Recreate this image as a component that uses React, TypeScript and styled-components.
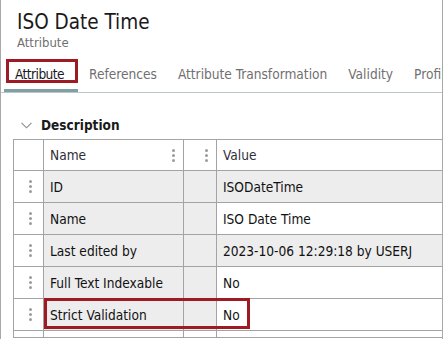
import React from "react";
import styled, { createGlobalStyle } from "styled-components";

const Global = createGlobalStyle`
  html, body { margin: 0; padding: 0; background: #ffffff; }
  body { font-family: "DejaVu Sans Condensed", "DejaVu Sans", "Liberation Sans", sans-serif; }
  * { box-sizing: border-box; }
`;

const Frame = styled.div`
  width: 443px;
  height: 339px;
  overflow: hidden;
  background: #ffffff;
  border-left: 1px solid #a8a8a8;
  border-right: 1px solid #a8a8a8;
`;

const Header = styled.header`
  padding: 10px 0 0 16px;
`;

const Title = styled.h1`
  margin: 0;
  font-size: 20.5px;
  line-height: 24px;
  font-weight: 400;
  color: #1a1a1a;
`;

const Subtitle = styled.div`
  margin-top: 1px;
  font-size: 13px;
  line-height: 16px;
  color: #6f6f6f;
`;

const TabStrip = styled.nav`
  display: flex;
  margin-top: 9px;
  padding-left: 3px;
  border-bottom: 1px solid #bcc6c8;
  white-space: nowrap;
`;

const Tab = styled.div<{ $active?: boolean }>`
  position: relative;
  flex: none;
  padding: 6px ${(p) => (p.$active ? "14px" : "10px")} 7px 11px;
  font-size: 13.6px;
  line-height: 16px;
  letter-spacing: ${(p) => (p.$active ? "-0.55px" : "0")};
  color: ${(p) => (p.$active ? "#1a1a1a" : "#707070")};
  border-bottom: 3px solid ${(p) => (p.$active ? "#7fa1a6" : "transparent")};
`;

const Highlight = styled.span<{ $l: number; $t: number; $w: number; $h: number }>`
  position: absolute;
  left: ${(p) => p.$l}px;
  top: ${(p) => p.$t}px;
  width: ${(p) => p.$w}px;
  height: ${(p) => p.$h}px;
  border: 3px solid #9e1b24;
  pointer-events: none;
`;

const Section = styled.section`
  padding: 24px 0 0 12px;
`;

const SectionHead = styled.div`
  display: flex;
  align-items: center;
  gap: 9px;
  height: 16px;
  padding-left: 8px;
  margin-bottom: 6px;
  font-size: 13.5px;
  font-weight: 700;
  color: #1a1a1a;
`;

const Table = styled.div`
  display: flex;
  flex-direction: column;
  border-left: 1px solid #a3a3a3;
  border-top: 1px solid #a3a3a3;
`;

const Row = styled.div<{ $h: number }>`
  position: relative;
  display: grid;
  grid-template-columns: 30px 140px 33px 1fr;
  height: ${(p) => p.$h}px;
`;

const Cell = styled.div<{ $gray?: boolean; $last?: boolean; $head?: boolean }>`
  display: flex;
  align-items: center;
  padding: 0 8px 0 6px;
  font-size: 13.6px;
  color: ${(p) => (p.$head ? "#2e2e3a" : "#111111")};
  background: ${(p) => (p.$gray ? "#ededed" : "#ffffff")};
  border-bottom: 1px solid #a3a3a3;
  border-right: ${(p) => (p.$last ? "none" : "1px solid #a3a3a3")};
  white-space: nowrap;
  overflow: hidden;
`;

const HandleCell = styled(Cell)`
  justify-content: center;
  padding: 0 0 0 4px;
`;

const Label = styled.span`
  flex: 1;
`;

const Dots = styled.span`
  display: flex;
  flex-direction: column;
  gap: 2px;
  & > i {
    display: block;
    width: 3px;
    height: 3px;
    border-radius: 50%;
    background: #9c9c9c;
  }
`;

const Kebab = () => (
  <Dots>
    <i />
    <i />
    <i />
  </Dots>
);

const Chevron = () => (
  <svg width="11" height="7" viewBox="0 0 11 7">
    <polyline points="0.5,0.8 5.5,5.8 10.5,0.8" fill="none" stroke="#8c8c8c" strokeWidth="1.1" />
  </svg>
);

type Item = { name: string; value: string; readOnly: boolean; mark?: boolean };

const items: Item[] = [
  { name: "ID", value: "ISODateTime", readOnly: true },
  { name: "Name", value: "ISO Date Time", readOnly: false },
  { name: "Last edited by", value: "2023-10-06 12:29:18 by USERJ", readOnly: true },
  { name: "Full Text Indexable", value: "No", readOnly: false },
  { name: "Strict Validation", value: "No", readOnly: false, mark: true },
];

const tabs = ["References", "Attribute Transformation", "Validity", "Profile"];

export default function App() {
  return (
    <>
      <Global />
      <Frame>
        <Header>
          <Title>ISO Date Time</Title>
          <Subtitle>Attribute</Subtitle>
        </Header>
        <TabStrip>
          <Tab $active>
            <u>A</u>ttribute
            <Highlight $l={2} $t={-1} $w={72} $h={24} />
          </Tab>
          {tabs.map((t) => (
            <Tab key={t}>{t}</Tab>
          ))}
        </TabStrip>
        <Section>
          <SectionHead>
            <Chevron />
            <span>Description</span>
          </SectionHead>
          <Table>
            <Row $h={31}>
              <HandleCell />
              <Cell $head>
                <Label>Name</Label>
                <Kebab />
              </Cell>
              <Cell $head>
                <Label />
                <Kebab />
              </Cell>
              <Cell $head $last>
                <Label>Value</Label>
              </Cell>
            </Row>
            {items.map((it) => (
              <Row $h={32} key={it.name}>
                <HandleCell>
                  <Kebab />
                </HandleCell>
                <Cell $gray>{it.name}</Cell>
                <Cell $gray />
                <Cell $gray={it.readOnly} $last>
                  {it.value}
                </Cell>
                {it.mark && <Highlight $l={30} $t={-1} $w={206} $h={31} />}
              </Row>
            ))}
            <Row $h={7}>
              <HandleCell />
              <Cell />
              <Cell />
              <Cell $last />
            </Row>
          </Table>
        </Section>
      </Frame>
    </>
  );
}
